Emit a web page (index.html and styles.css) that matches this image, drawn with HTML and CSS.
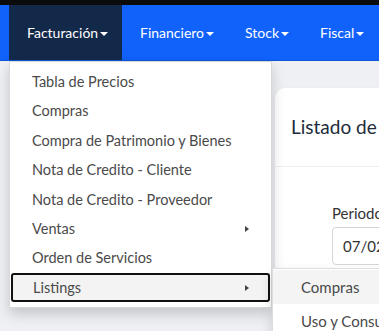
FILE: index.html
```html
<!DOCTYPE html>
<html lang="es">
<head>
  <meta charset="UTF-8">
  <title>Listados</title>
  <link rel="stylesheet" href="styles.css">
</head>
<body>

  <div class="topbar"></div>

  <nav class="navbar">
    <div class="nav-item active">
      <span>Facturación</span><span class="caret"></span>

      <!-- Menu abierto -->
      <ul class="dropdown">
        <li><a>Tabla de Precios</a></li>
        <li><a>Compras</a></li>
        <li><a>Compra de Patrimonio y Bienes</a></li>
        <li><a>Nota de Credito - Cliente</a></li>
        <li><a>Nota de Credito - Proveedor</a></li>
        <li class="sub"><a>Ventas</a></li>
        <li><a>Orden de Servicios</a></li>
        <li class="sub open">
          <a class="focus">Listings</a>
          <ul class="submenu">
            <li><a class="hover">Compras</a></li>
            <li><a>Uso y Consumo</a></li>
          </ul>
        </li>
      </ul>
    </div>
    <div class="nav-item"><span>Financiero</span><span class="caret"></span></div>
    <div class="nav-item"><span>Stock</span><span class="caret"></span></div>
    <div class="nav-item"><span>Fiscal</span><span class="caret"></span></div>
  </nav>

  <div class="page">
    <div class="card">
      <div class="card-header">Listado de Compras</div>
      <div class="card-body">
        <label class="field">Periodo
          <div class="input">07/02/2024</div>
        </label>
      </div>
    </div>
  </div>

</body>
</html>
```

FILE: styles.css
```css
* {
  box-sizing: border-box;
}

body {
  margin: 0;
  font-family: Lato, 'Open Sans', sans-serif;
  background-color: #eef0f4;
  overflow: hidden;
  height: 331px;
}

.topbar {
  height: 5px;
  background: #0b0b0c;
}

.navbar {
  display: flex;
  height: 56px;
  padding-left: 9px;
  background-color: #1162fb;
  border-bottom: 1px solid #0f55d8;
}

.nav-item {
  position: relative;
  display: flex;
  align-items: center;
  padding: 0 13px 0 18px;
  color: #fff;
  font-size: 14px;
  white-space: nowrap;
}

.nav-item.active {
  background-color: #13294a;
  width: 113px;
}

.caret {
  display: inline-block;
  margin-left: 2px;
  margin-top: 2px;
  border-top: 4px solid #fff;
  border-left: 4px solid transparent;
  border-right: 4px solid transparent;
}

.dropdown {
  position: absolute;
  top: 56px;
  left: 0;
  width: 263px;
  margin: 0;
  padding: 5px 0;
  list-style: none;
  background: #fff;
  border: 1px solid #d6d8dc;
  box-shadow: 0 6px 12px rgba(0,0,0,0.18);
  z-index: 10;
}

.dropdown li {
  position: relative;
}

.dropdown a {
  display: block;
  padding: 4px 22px;
  font-size: 14.5px;
  line-height: 21.4px;
  color: #4a4a4a;
}

.dropdown .sub > a::after {
  content: "";
  position: absolute;
  right: 22px;
  top: 12px;
  border-left: 4px solid #444;
  border-top: 3.5px solid transparent;
  border-bottom: 3.5px solid transparent;
}

.dropdown a.focus {
  background: #f3f3f3;
  border: 2px solid #111;
  border-radius: 3px;
  padding: 2px 20px;
  margin: 0 1px;
}

.submenu {
  position: absolute;
  top: -5px;
  left: 262px;
  width: 200px;
  margin: 0;
  padding: 1px 0 0;
  list-style: none;
  background: #fff;
  border: 1px solid #dcdde0;
  box-shadow: 0 6px 12px rgba(0,0,0,0.15);
}

.submenu a {
  padding: 7px 28px 6px;
  font-size: 15px;
}

.submenu a.hover {
  background: #f4f4f5;
}

.page {
  padding: 27px 0 0 275px;
}

.card {
  width: 400px;
  height: 300px;
  background: #fff;
  border-radius: 10px;
  box-shadow: 0 1px 4px rgba(0,0,0,0.05);
}

.card-header {
  padding: 27px 16px 28px;
  font-size: 19px;
  color: #222b3a;
  border-bottom: 1px solid #eceef1;
}

.card-body {
  padding: 37px 0 0 57px;
}

.field {
  display: block;
  font-size: 15px;
  color: #333;
}

.input {
  margin-top: 5px;
  width: 150px;
  height: 38px;
  padding: 9px 10px;
  border: 1px solid #d4d6da;
  border-radius: 4px;
  font-size: 15px;
  color: #333;
}
```
